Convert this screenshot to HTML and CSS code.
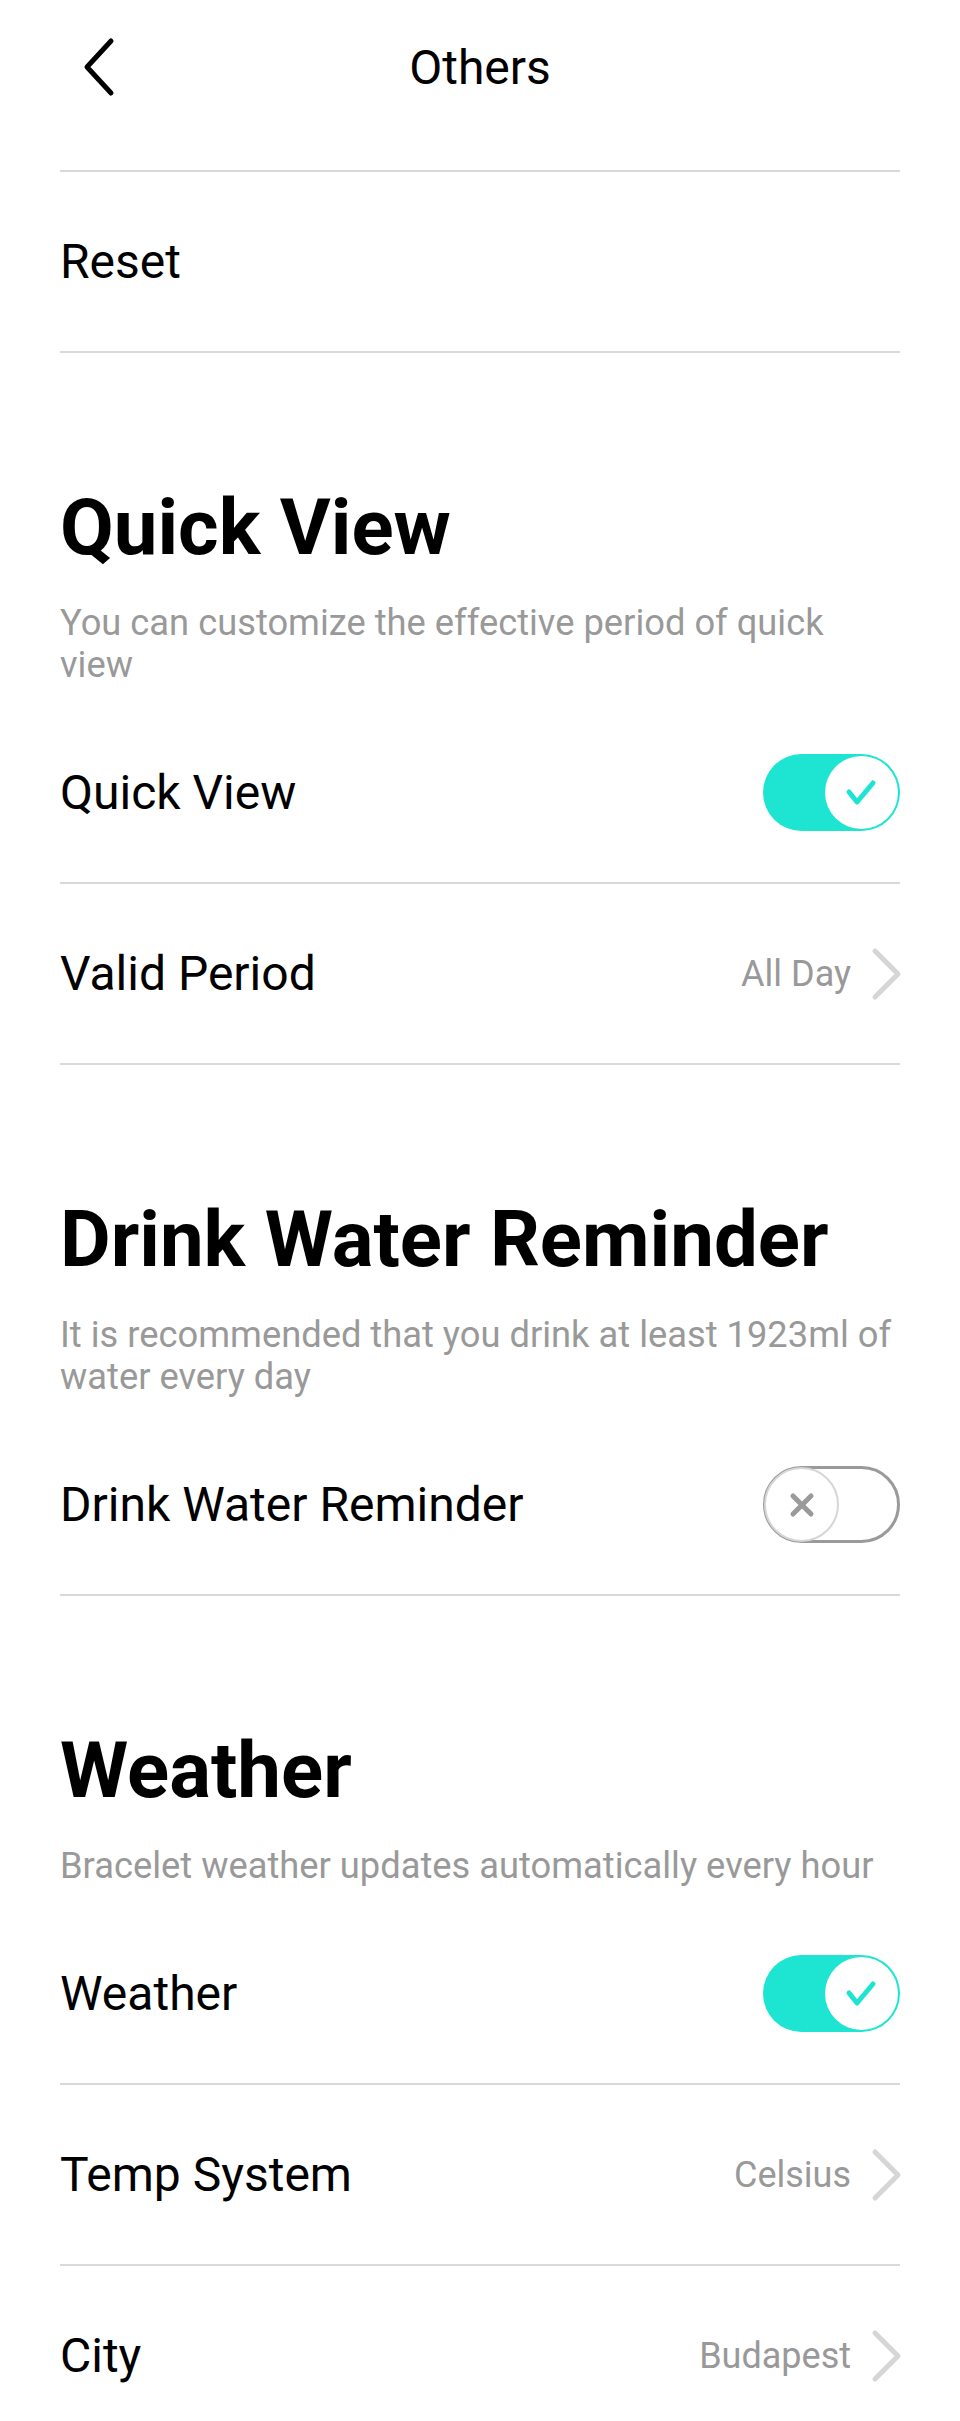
FILE: index.html
```html
<!DOCTYPE html>
<html lang="en">
<head>
  <meta charset="UTF-8" />
  <meta name="viewport" content="width=device-width, initial-scale=1.0"/>
  <title>Others</title>
  <link rel="stylesheet" href="styles.css">
</head>
<body>
  <div class="page">
    <header class="topbar">
      <button class="back" aria-label="Back">
        <svg width="40" height="60" viewBox="0 0 40 60">
          <polyline points="28,4 4,30 28,56" fill="none" stroke="#000" stroke-width="5" stroke-linecap="round" stroke-linejoin="round"/>
        </svg>
      </button>
      <h1 class="title">Others</h1>
      <span></span>
    </header>

    <div class="row">
      <span class="label">Reset</span>
    </div>

    <section class="section">
      <h2>Quick View</h2>
      <p class="desc">You can customize the effective period of quick view</p>
      <div class="row">
        <span class="label">Quick View</span>
        <span class="switch on">
          <span class="knob">
            <svg width="40" height="40" viewBox="-20 -20 40 40">
              <polyline points="-13,-1 -5,9 11,-10" fill="none" stroke="#1ee4d2" stroke-width="5" stroke-linecap="round" stroke-linejoin="round"/>
            </svg>
          </span>
        </span>
      </div>
      <div class="row">
        <span class="label">Valid Period</span>
        <span class="value">All Day
          <svg class="chevron" width="32" height="54" viewBox="0 0 32 54">
            <polyline points="5,4 28,27 5,50" fill="none" stroke="#d6d6d6" stroke-width="5" stroke-linecap="round" stroke-linejoin="round"/>
          </svg>
        </span>
      </div>
    </section>

    <section class="section">
      <h2>Drink Water Reminder</h2>
      <p class="desc">It is recommended that you drink at least 1923ml of water every day</p>
      <div class="row">
        <span class="label">Drink Water Reminder</span>
        <span class="switch off">
          <span class="knob">
            <svg width="30" height="30" viewBox="-15 -15 30 30">
              <path d="M-9,-9 L9,9 M9,-9 L-9,9" fill="none" stroke="#9a9a9a" stroke-width="5" stroke-linecap="round"/>
            </svg>
          </span>
        </span>
      </div>
    </section>

    <section class="section">
      <h2>Weather</h2>
      <p class="desc">Bracelet weather updates automatically every hour</p>
      <div class="row">
        <span class="label">Weather</span>
        <span class="switch on">
          <span class="knob">
            <svg width="40" height="40" viewBox="-20 -20 40 40">
              <polyline points="-13,-1 -5,9 11,-10" fill="none" stroke="#1ee4d2" stroke-width="5" stroke-linecap="round" stroke-linejoin="round"/>
            </svg>
          </span>
        </span>
      </div>
      <div class="row">
        <span class="label">Temp System</span>
        <span class="value">Celsius
          <svg class="chevron" width="32" height="54" viewBox="0 0 32 54">
            <polyline points="5,4 28,27 5,50" fill="none" stroke="#d6d6d6" stroke-width="5" stroke-linecap="round" stroke-linejoin="round"/>
          </svg>
        </span>
      </div>
      <div class="row">
        <span class="label">City</span>
        <span class="value">Budapest
          <svg class="chevron" width="32" height="54" viewBox="0 0 32 54">
            <polyline points="5,4 28,27 5,50" fill="none" stroke="#d6d6d6" stroke-width="5" stroke-linecap="round" stroke-linejoin="round"/>
          </svg>
        </span>
      </div>
    </section>
  </div>
</body>
</html>
```

FILE: styles.css
```css
:root {
  --teal: #1ee4d2;
  --line: #d9d9d9;
  --muted: #999999;
  --text: #000000;
}

* {
  box-sizing: border-box;
}

body {
  margin: 0;
  background: #fff;
  color: var(--text);
  font-family: Roboto, "Noto Sans", sans-serif;
}

.page {
  padding: 0 60px;
}

.topbar {
  height: 172px;
  padding-bottom: 36px;
  border-bottom: 2px solid var(--line);
  display: grid;
  grid-template-columns: 1fr auto 1fr;
  align-items: center;
}

.back {
  justify-self: start;
  margin-left: 23px;
  padding: 0;
  border: none;
  background: none;
  display: flex;
  cursor: pointer;
}

.title {
  margin: 0;
  font-size: 48px;
  font-weight: 400;
}

.row {
  height: 181px;
  border-bottom: 2px solid var(--line);
  display: flex;
  align-items: center;
  justify-content: space-between;
}

.label {
  font-size: 48px;
}

.section {
  padding-top: 130px;
}

.section h2 {
  margin: 0;
  font-size: 78px;
  font-weight: 700;
  line-height: 90px;
}

.desc {
  margin: 29px 0 17px;
  max-width: 836px;
  font-size: 36.3px;
  line-height: 42px;
  color: var(--muted);
}

.value {
  display: flex;
  align-items: center;
  gap: 19px;
  font-size: 36px;
  color: var(--muted);
}

.chevron {
  margin-right: -2px;
}

.switch {
  position: relative;
  width: 137px;
  height: 77px;
  border-radius: 39px;
}

.switch.on {
  background: var(--teal);
}

.switch.off {
  border: 3px solid #9a9a9a;
  background: #fff;
}

.knob {
  position: absolute;
  display: flex;
  align-items: center;
  justify-content: center;
  border-radius: 50%;
  background: #fff;
}

.switch.on .knob {
  top: 2px;
  right: 2px;
  width: 73px;
  height: 73px;
}

.switch.off .knob {
  top: -2px;
  left: -2px;
  width: 75px;
  height: 75px;
  border: 2px solid #d6d6d6;
}
```
